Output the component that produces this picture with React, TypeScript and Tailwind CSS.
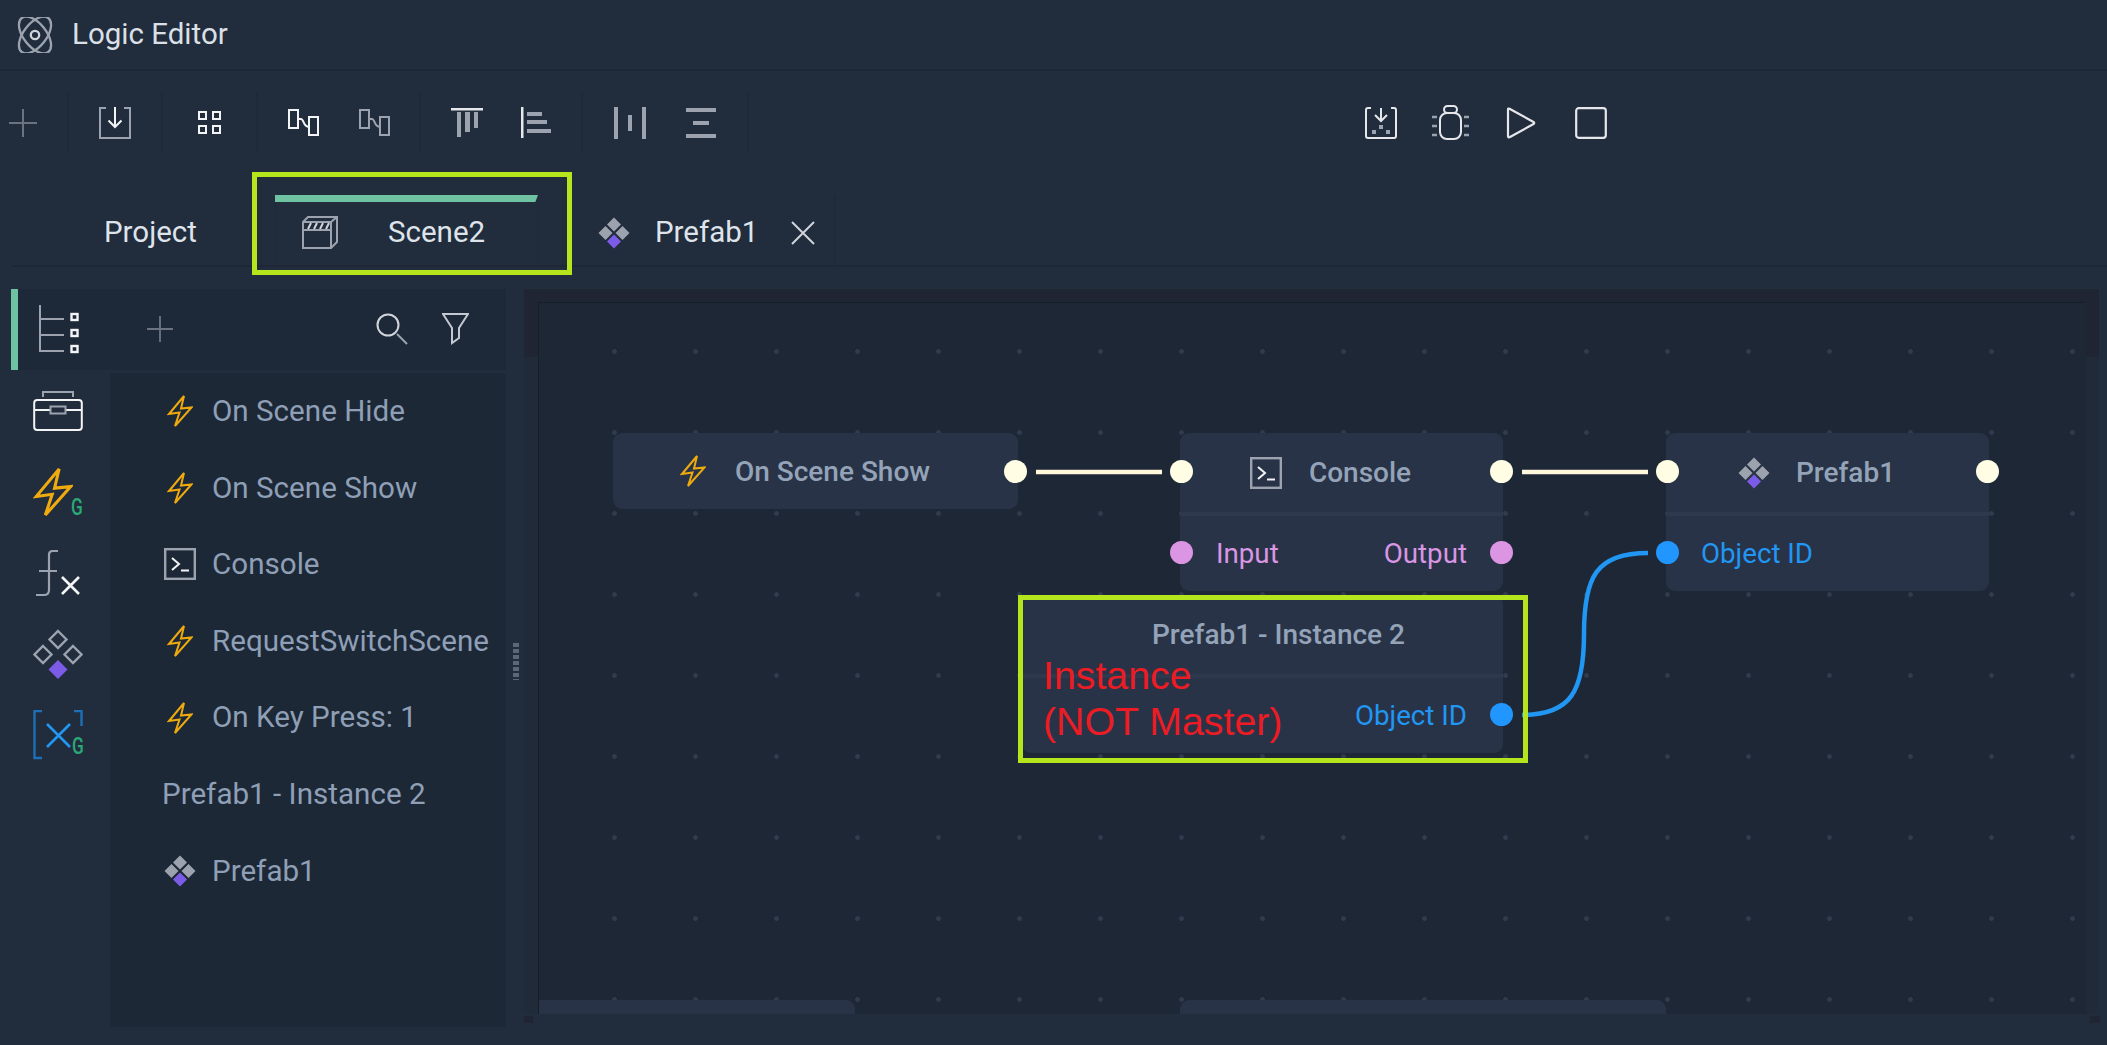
import React from "react";

const GRAY = "#9ca3af";

function Bolt({ w = 26, h = 34 }: { w?: number; h?: number }) {
  return (
    <svg width={w} height={h} viewBox="0 0 26 34" fill="none" stroke="#eeaa0e" strokeWidth="2" strokeLinejoin="miter">
      <path d="M17 2 L2 20 L12.5 18.5 L8 32 L24.5 13.5 L14 14.5 Z" />
    </svg>
  );
}

function ConsoleIcon({ size = 32 }: { size?: number }) {
  return (
    <svg width={size} height={size} viewBox="0 0 32 32" fill="none">
      <rect x="1.2" y="1.2" width="29.6" height="29.6" stroke={GRAY} strokeWidth="2.4" />
      <path d="M8 10 L15 16 L8 22" stroke="#f3f4f6" strokeWidth="2" />
      <path d="M17 22.5 H25" stroke="#f3f4f6" strokeWidth="2" />
    </svg>
  );
}

function PrefabIcon({ size = 32 }: { size?: number }) {
  return (
    <svg width={size} height={size} viewBox="0 0 32 32">
      <path d="M16 0.5 L23 7.5 L16 14.5 L9 7.5 Z" fill={GRAY} />
      <path d="M7.5 9 L14.5 16 L7.5 23 L0.5 16 Z" fill={GRAY} />
      <path d="M24.5 9 L31.5 16 L24.5 23 L17.5 16 Z" fill={GRAY} />
      <path d="M16 17.5 L23 24.5 L16 31.5 L9 24.5 Z" fill="#7c5ce6" />
    </svg>
  );
}

function AtomIcon() {
  return (
    <svg width="36" height="36" viewBox="3 3 30 30" fill="none" stroke={GRAY} strokeWidth="1.9">
      <ellipse cx="18" cy="18" rx="9.5" ry="18" transform="rotate(-38 18 18)" />
      <ellipse cx="18" cy="18" rx="9.5" ry="18" transform="rotate(38 18 18)" />
      <circle cx="18" cy="18" r="3.5" stroke="#d1d5db" />
    </svg>
  );
}

function ImportIcon() {
  return (
    <svg width="32" height="32" viewBox="0 0 32 32" fill="none" strokeWidth="2">
      <path d="M7 1 H1 V31 H31 V1 H25" stroke={GRAY} />
      <path d="M16 0 V20 M9.5 13.5 L16 20 L22.5 13.5" stroke="#f3f4f6" />
    </svg>
  );
}

function GridIcon() {
  return (
    <svg width="23" height="23" viewBox="0 0 23 23" fill="none" stroke="#f3f4f6" strokeWidth="2">
      <rect x="1" y="1" width="7" height="7" />
      <rect x="15" y="1" width="7" height="7" />
      <rect x="1" y="15" width="7" height="7" />
      <rect x="15" y="15" width="7" height="7" />
    </svg>
  );
}

function LinkIcon({ color }: { color: string }) {
  return (
    <svg width="31" height="27" viewBox="0 0 31 27" fill="none" stroke={color} strokeWidth="2">
      <rect x="1" y="1" width="9" height="18" />
      <rect x="21" y="8" width="9" height="18" />
      <path d="M10 10 H13 C16 10 15 18 21 18" />
    </svg>
  );
}

function AlignTop() {
  return (
    <svg width="32" height="30" viewBox="0 0 32 30">
      <rect x="0" y="0" width="32" height="2.5" fill="#e5e7eb" />
      <rect x="6" y="4" width="4" height="25" fill={GRAY} />
      <rect x="14" y="4" width="5" height="20" fill={GRAY} />
      <rect x="23" y="4" width="4" height="16" fill={GRAY} />
    </svg>
  );
}

function AlignLeft() {
  return (
    <svg width="30" height="31" viewBox="0 0 30 31">
      <rect x="0" y="0" width="2.5" height="31" fill="#e5e7eb" />
      <rect x="6" y="5" width="15" height="4" fill={GRAY} />
      <rect x="6" y="13" width="20" height="4" fill={GRAY} />
      <rect x="6" y="22" width="24" height="4" fill={GRAY} />
    </svg>
  );
}

function DistH() {
  return (
    <svg width="32" height="32" viewBox="0 0 32 32" fill={GRAY}>
      <rect x="0" y="0" width="4" height="32" />
      <rect x="14" y="8" width="4" height="16" />
      <rect x="28" y="0" width="4" height="32" />
    </svg>
  );
}

function DistV() {
  return (
    <svg width="30" height="30" viewBox="0 0 30 30" fill={GRAY}>
      <rect x="0" y="0" width="30" height="4" />
      <rect x="7" y="13" width="16" height="4" />
      <rect x="0" y="26" width="30" height="4" />
    </svg>
  );
}

function SaveRun() {
  return (
    <svg width="32" height="32" viewBox="0 0 32 32" fill="none">
      <path d="M6 1 H3 Q1 1 1 3 V29 Q1 31 3 31 H29 Q31 31 31 29 V3 Q31 1 29 1 H26" stroke="#e5e7eb" strokeWidth="2" />
      <path d="M16 1 V13 M10 8 L16 14 L22 8" stroke="#e5e7eb" strokeWidth="2" />
      <rect x="14" y="18" width="4" height="4" fill={GRAY} />
      <rect x="7" y="23" width="4" height="4" fill={GRAY} />
      <rect x="21" y="23" width="4" height="4" fill={GRAY} />
    </svg>
  );
}

function BugIcon() {
  return (
    <svg width="37" height="35" viewBox="0 0 37 35" fill="none">
      <rect x="8" y="8" width="21" height="26" rx="7" stroke="#e5e7eb" strokeWidth="2" />
      <rect x="12" y="1" width="13" height="7" rx="3.5" stroke="#e5e7eb" strokeWidth="2" />
      <path d="M0 12 H5 M0 21 H5 M0 30 H5 M32 12 H37 M32 21 H37 M32 30 H37" stroke={GRAY} strokeWidth="2.4" />
    </svg>
  );
}

function PlayIcon() {
  return (
    <svg width="30" height="32" viewBox="0 0 30 32" fill="none" stroke="#e5e7eb" strokeWidth="2.2" strokeLinejoin="round">
      <path d="M2 2.5 Q2 1 3.5 1.7 L27.5 15 Q29 16 27.5 17 L4 30 Q2 31 2 29 Z" />
    </svg>
  );
}

function StopIcon() {
  return (
    <svg width="32" height="32" viewBox="0 0 32 32" fill="none" stroke="#e5e7eb" strokeWidth="2.2">
      <rect x="1.2" y="1.2" width="29.6" height="29.6" rx="2.5" />
    </svg>
  );
}

function Clapper() {
  return (
    <svg width="36" height="33" viewBox="0 0 36 33" fill="none" stroke={GRAY} strokeWidth="2">
      <path d="M1 32 V6 L6 1 H35 V26 L29 32 Z" />
      <path d="M1 6 H29 V32 M29 6 L35 1" />
      <path d="M1 14 H29" />
      <path d="M6 13 L9 7 M12 13 L15 7 M18 13 L21 7 M24 13 L27 7" strokeWidth="2" stroke="#d1d5db" />
    </svg>
  );
}

function Plus({ size, color }: { size: number; color: string }) {
  return (
    <svg width={size} height={size} viewBox="0 0 28 28" stroke={color} strokeWidth="2">
      <path d="M14 0 V28 M0 14 H28" />
    </svg>
  );
}

function SearchIcon() {
  return (
    <svg width="32" height="32" viewBox="0 0 32 32" fill="none">
      <circle cx="12" cy="12" r="10.5" stroke="#d1d5db" strokeWidth="2" />
      <path d="M21 21 L31 31" stroke={GRAY} strokeWidth="2" />
    </svg>
  );
}

function FilterIcon() {
  return (
    <svg width="27" height="32" viewBox="0 0 27 32" fill="none" stroke="#c4c9d1" strokeWidth="2">
      <path d="M1 1 H26 L17 15 V25 L10 30 V15 Z" />
    </svg>
  );
}

function TreeIcon() {
  return (
    <svg width="40" height="50" viewBox="0 0 40 50" fill="none">
      <path d="M1 0 V46 H25 M1 14 H25 M1 30 H25" stroke={GRAY} strokeWidth="2" />
      <rect x="32.5" y="9" width="6" height="6" stroke="#f3f4f6" strokeWidth="2.4" />
      <rect x="32.5" y="25" width="6" height="6" stroke="#f3f4f6" strokeWidth="2.4" />
      <rect x="32.5" y="41" width="6" height="6" stroke="#f3f4f6" strokeWidth="2.4" />
    </svg>
  );
}

function ToolboxIcon() {
  return (
    <svg width="50" height="41" viewBox="0 0 50 41" fill="none">
      <path d="M10 7 V2 H40 V7" stroke={GRAY} strokeWidth="2" />
      <rect x="1.2" y="10" width="47.6" height="30" rx="3" stroke="#f3f4f6" strokeWidth="2" />
      <path d="M1 20 H17 M33 20 H49" stroke="#f3f4f6" strokeWidth="2" />
      <rect x="17.5" y="16.5" width="15" height="7" stroke={GRAY} strokeWidth="2" />
    </svg>
  );
}

function FxIcon() {
  return (
    <svg width="44" height="46" viewBox="0 0 44 46" fill="none">
      <path d="M22 1 H17 Q13 1 13 5 V40 Q13 45 8 45 H0 M3 21 H21" stroke={GRAY} strokeWidth="2.2" />
      <path d="M26 27 L43 44 M43 27 L26 44" stroke="#f3f4f6" strokeWidth="2.6" />
    </svg>
  );
}

function RailPrefab() {
  return (
    <svg width="50" height="50" viewBox="0 0 50 50" fill="none" stroke={GRAY} strokeWidth="2.4">
      <path d="M25 2 L33.5 10.5 L25 19 L16.5 10.5 Z" />
      <path d="M10 17 L18.5 25.5 L10 34 L1.5 25.5 Z" />
      <path d="M40 17 L48.5 25.5 L40 34 L31.5 25.5 Z" />
      <path d="M25 31 L34.5 40.5 L25 50 L15.5 40.5 Z" fill="#7c5ce6" stroke="none" />
    </svg>
  );
}

function VarIcon() {
  return (
    <svg width="50" height="50" viewBox="0 0 50 50" fill="none">
      <path d="M9 1 H1.5 V48 H9" stroke="#1f6fb5" strokeWidth="2.4" />
      <path d="M41 1 H48.5 V16" stroke="#1f6fb5" strokeWidth="2.4" />
      <path d="M14 14 L37 37 M37 14 L14 37" stroke="#2196f3" strokeWidth="2.6" />
    </svg>
  );
}

function Sep() {
  return <div className="w-[2px] h-[61px] bg-[#1f2a39] shrink-0" />;
}

function Row({ icon, label }: { icon?: React.ReactNode; label: string }) {
  return (
    <div className="h-[76.6px] flex items-center pl-[52px]">
      {icon ? <div className="w-[36px] mr-[14px] flex justify-center items-center">{icon}</div> : null}
      <span className="text-[29.6px] text-[#8f9fb6] whitespace-nowrap">{label}</span>
    </div>
  );
}

function Port({ cls }: { cls: string }) {
  return <div className={"absolute w-[23px] h-[23px] rounded-full " + cls} />;
}

export default function App() {
  return (
    <div className="relative w-[2107px] h-[1045px] overflow-hidden bg-[#212c3d] flex flex-col font-['Roboto',sans-serif]">
      {/* title bar */}
      <div className="h-[71px] shrink-0 border-b-2 border-[#1c2636] flex items-center pl-[17px] gap-[19px]">
        <AtomIcon />
        <span className="text-[29.5px] text-[#dbe0e6]">Logic Editor</span>
      </div>

      {/* toolbar */}
      <div className="h-[101px] shrink-0 flex items-start pt-[21px]">
        <div className="w-[67px] h-[61px] flex items-center pl-[9px]">
          <Plus size={28} color="#6b7280" />
        </div>
        <Sep />
        <div className="w-[92px] h-[61px] flex items-center justify-center">
          <ImportIcon />
        </div>
        <Sep />
        <div className="w-[93px] h-[61px] flex items-center justify-center">
          <GridIcon />
        </div>
        <Sep />
        <div className="w-[161px] h-[61px] flex items-center justify-center gap-[40px]">
          <LinkIcon color="#f3f4f6" />
          <LinkIcon color={GRAY} />
        </div>
        <Sep />
        <div className="w-[160px] h-[61px] flex items-center justify-center gap-[38px]">
          <AlignTop />
          <AlignLeft />
        </div>
        <Sep />
        <div className="w-[164px] h-[61px] flex items-center justify-center gap-[40px]">
          <DistH />
          <DistV />
        </div>
        <Sep />
        <div className="ml-[597px] h-[61px] flex items-center">
          <div className="w-[70px] flex justify-center"><SaveRun /></div>
          <div className="w-[68px] flex justify-center"><BugIcon /></div>
          <div className="w-[73px] flex justify-center"><PlayIcon /></div>
          <div className="w-[68px] flex justify-center"><StopIcon /></div>
        </div>
      </div>

      {/* tabs */}
      <div className="h-[95px] shrink-0 ml-[11px] border-b-2 border-[#1d2735] flex">
        <div className="w-[264px] flex items-center pl-[93px] pt-[27px]">
          <span className="text-[29.5px] text-[#dfe4ea]">Project</span>
        </div>
        <div className="w-[263px] mt-[23px] flex flex-col border-x border-[#1f2a39]">
          <div className="h-[7px] -mx-px bg-[#6fc3a3] [clip-path:polygon(0_0,100%_0,99%_100%,0_100%)]" />
          <div className="flex-1 flex items-center pl-[26px] gap-[50px] pb-[2px]">
            <Clapper />
            <span className="text-[29.5px] text-[#dfe4ea]">Scene2</span>
          </div>
        </div>
        <div className="w-[298px] mt-[23px] pt-[5px] flex items-center pl-[60px] border-r-2 border-[#1f2a39]">
          <PrefabIcon />
          <span className="text-[29.5px] text-[#dfe4ea] ml-[25px]">Prefab1</span>
          <svg className="ml-[33px]" width="24" height="24" viewBox="0 0 24 24" stroke="#d1d5db" strokeWidth="2">
            <path d="M1 1 L23 23 M23 1 L1 23" />
          </svg>
        </div>
      </div>

      {/* body */}
      <div className="flex-1 flex pt-[22px] min-h-0">
        {/* rail */}
        <div className="w-[110px] shrink-0 flex flex-col">
          <div className="ml-[11px] h-[81px] border-l-[7px] border-[#6fc3a3] bg-[#1d2938] flex items-center justify-center pr-[12px]">
            <div className="ml-[1px]"><TreeIcon /></div>
          </div>
          <div className="h-[81px] flex items-center justify-center pl-[18px] pr-[12px]"><ToolboxIcon /></div>
          <div className="h-[81px] flex items-center justify-center pl-[18px] pr-[12px]">
            <div className="relative w-[50px] h-[54px]">
              <Bolt w={40} h={54} />
              <span className="absolute left-[36px] top-[30px] text-[23px] leading-[26px] font-medium text-[#2aa876] scale-x-75">G</span>
            </div>
          </div>
          <div className="h-[81px] flex items-center justify-center pl-[18px] pr-[12px]"><FxIcon /></div>
          <div className="h-[81px] flex items-center justify-center pl-[18px] pr-[12px]"><RailPrefab /></div>
          <div className="h-[81px] flex items-center justify-center pl-[18px] pr-[12px]">
            <div className="relative w-[50px] h-[50px]">
              <VarIcon />
              <span className="absolute left-[37px] top-[24px] text-[23px] leading-[26px] font-medium text-[#2aa876] scale-x-75">G</span>
            </div>
          </div>
        </div>

        {/* panel */}
        <div className="w-[396px] shrink-0 flex flex-col h-[738px]">
          <div className="h-[81px] shrink-0 bg-[#1d2938] flex items-center pl-[37px] pb-[1px]">
            <Plus size={26} color="#6b7280" />
            <div className="ml-[203px]"><SearchIcon /></div>
            <div className="ml-[34px]"><FilterIcon /></div>
          </div>
          <div className="mt-[3px] flex-1 bg-[#1c2836]">
            <Row icon={<Bolt />} label="On Scene Hide" />
            <Row icon={<Bolt />} label="On Scene Show" />
            <Row icon={<ConsoleIcon />} label="Console" />
            <Row icon={<Bolt />} label="RequestSwitchScene" />
            <Row icon={<Bolt />} label="On Key Press: 1" />
            <Row label="Prefab1 - Instance 2" />
            <Row icon={<PrefabIcon />} label="Prefab1" />
          </div>
        </div>

        {/* splitter */}
        <div className="w-[18px] shrink-0 flex justify-center">
          <div className="mt-[354px] w-[6px] h-[37px] ml-[1px] bg-[repeating-linear-gradient(to_bottom,#5d6675_0px,#5d6675_4px,transparent_4px,transparent_6px)]" />
        </div>

        {/* canvas */}
        <div className="relative w-[1575px] h-[725px] bg-[#202a39] shrink-0">
          <div className="absolute left-0 top-0 w-full h-[68px] bg-[#1f2533]" />
          <div className="absolute left-[14px] top-[13px] w-[1548px] h-[712px] bg-[#1e2735] border-l border-t border-[#161e2c] overflow-hidden">
            <div className="absolute inset-0 bg-[radial-gradient(circle,#2f3c4f_2px,transparent_2.6px)] bg-[size:81px_81px] bg-[position:35px_8px]" />

            {/* On Scene Show */}
            <div className="absolute left-[74px] top-[130px] w-[405px] h-[76px] rounded-[9px] bg-[#283347] flex items-center justify-center gap-[29px] pr-[21px]">
              <Bolt />
              <span className="text-[28px] font-medium text-[#94a3b8] pt-[1px]">On Scene Show</span>
            </div>

            {/* Console */}
            <div className="absolute left-[641px] top-[130px] w-[323px] h-[158px] rounded-[9px] bg-[#283347] flex flex-col">
              <div className="h-[79px] flex items-center justify-center gap-[27px] pr-[22px]">
                <ConsoleIcon />
                <span className="text-[28px] font-medium text-[#94a3b8]">Console</span>
              </div>
              <div className="h-[4px] bg-[#2e394d]" />
              <div className="flex-1 flex items-center justify-between pl-[36px] pr-[36px]">
                <span className="text-[27.7px] text-[#d996e4]">Input</span>
                <span className="text-[27.7px] text-[#d996e4]">Output</span>
              </div>
            </div>

            {/* Prefab1 */}
            <div className="absolute left-[1127px] top-[130px] w-[323px] h-[158px] rounded-[9px] bg-[#283347] flex flex-col">
              <div className="h-[79px] flex items-center justify-center gap-[26px] pr-[22px]">
                <PrefabIcon />
                <span className="text-[28px] font-medium text-[#94a3b8]">Prefab1</span>
              </div>
              <div className="h-[4px] bg-[#2e394d]" />
              <div className="flex-1 flex items-center pl-[35px]">
                <span className="text-[27.7px] text-[#2196f3]">Object ID</span>
              </div>
            </div>

            {/* Instance */}
            <div className="absolute left-[483px] top-[292px] w-[481px] h-[158px] rounded-[9px] bg-[#283347] flex flex-col">
              <div className="h-[79px] flex items-center justify-center pl-[32px]">
                <span className="text-[28px] font-medium text-[#94a3b8]">Prefab1 - Instance 2</span>
              </div>
              <div className="h-[4px] bg-[#2e394d]" />
              <div className="flex-1 flex items-center justify-end pr-[36px]">
                <span className="text-[27.7px] text-[#2196f3]">Object ID</span>
              </div>
            </div>

            {/* bottom clipped nodes */}
            <div className="absolute left-0 top-[697px] w-[316px] h-[30px] rounded-tr-[9px] bg-[#283347]" />
            <div className="absolute left-[641px] top-[697px] w-[486px] h-[30px] rounded-t-[9px] bg-[#283347]" />

            {/* wires */}
            <svg className="absolute inset-0" width="1548" height="712" fill="none">
              <path d="M497 169 H623" stroke="#fff8dc" strokeWidth="4.5" />
              <path d="M983 169 H1109" stroke="#fff8dc" strokeWidth="4.5" />
              <path d="M983 412 C1032 412 1045 388 1045 331 C1045 274 1057 250 1109 250" stroke="#2196f3" strokeWidth="4.5" />
            </svg>

            {/* ports */}
            <Port cls="left-[465px] top-[157px] bg-[#fffde3]" />
            <Port cls="left-[631px] top-[157px] bg-[#fffde3]" />
            <Port cls="left-[951px] top-[157px] bg-[#fffde3]" />
            <Port cls="left-[1117px] top-[157px] bg-[#fffde3]" />
            <Port cls="left-[1437px] top-[157px] bg-[#fffde3]" />
            <Port cls="left-[631px] top-[238px] bg-[#dc95e2]" />
            <Port cls="left-[951px] top-[238px] bg-[#dc95e2]" />
            <Port cls="left-[1117px] top-[238px] bg-[#2196ff]" />
            <Port cls="left-[951px] top-[400px] bg-[#2196ff]" />
          </div>
        </div>
      </div>

      {/* corner resize marks */}
      <div className="absolute left-[524px] top-[1016px] w-[9px] h-[7px] bg-[#1f2533]" />
      <div className="absolute left-[2090px] top-[1016px] w-[10px] h-[7px] bg-[#1f2533]" />

      {/* annotations */}
      <div className="absolute left-[252px] top-[172px] w-[320px] h-[103px] border-[5px] border-[#b5e61d]" />
      <div className="absolute left-[1018px] top-[595px] w-[510px] h-[168px] border-[5px] border-[#b5e61d]" />
      <div className="absolute left-[1043px] top-[652px] text-[39.3px] leading-[46px] text-[#ed1c24] font-['Liberation_Sans',sans-serif]">
        Instance
        <br />
        (NOT Master)
      </div>
    </div>
  );
}
